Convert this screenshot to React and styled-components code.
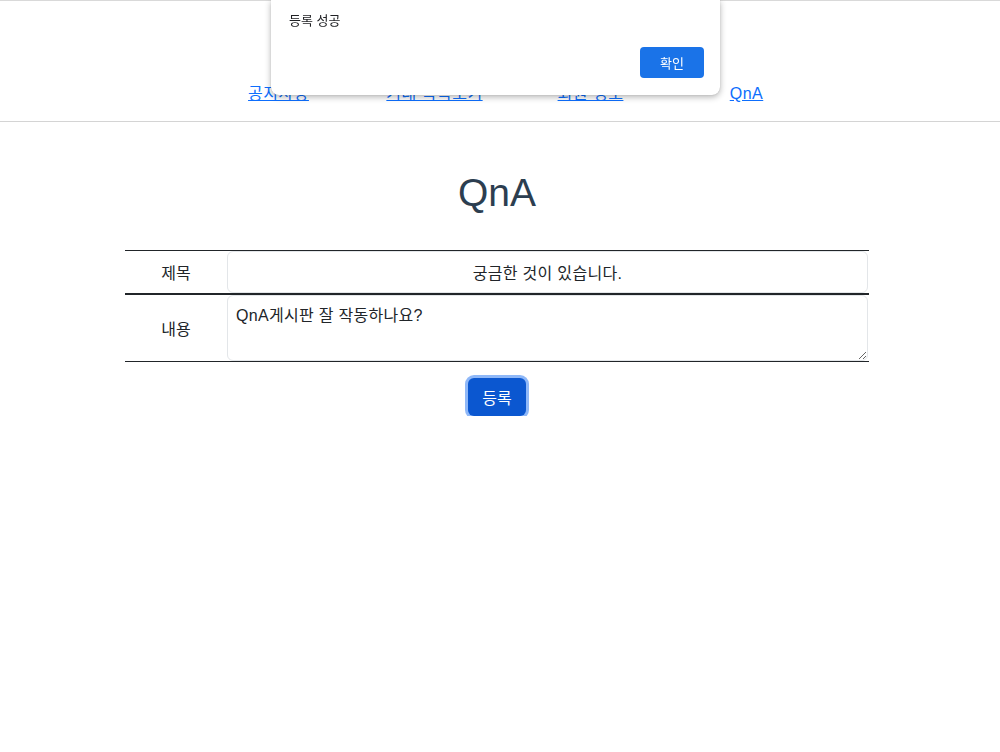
import React from "react";
import styled, { createGlobalStyle } from "styled-components";

const GlobalStyle = createGlobalStyle`
  html, body {
    margin: 0;
    padding: 0;
    background: #fff;
  }
  body {
    font-family: "Liberation Sans", "Noto Sans CJK KR", sans-serif;
    color: #212529;
    font-size: 16px;
  }
  * { box-sizing: border-box; }
`;

const Header = styled.header`
  height: 122px;
  border-top: 1px solid #d9d9d9;
  border-bottom: 1px solid #d4d4d4;
  display: flex;
  align-items: flex-end;
  justify-content: center;
  padding: 0 0 15px 25px;
`;

const Nav = styled.nav`
  display: flex;
`;

const NavLink = styled.a`
  width: 156px;
  text-align: center;
  font-size: 16px;
  line-height: 24px;
  letter-spacing: 0.5px;
  color: #0d6efd;
  text-decoration: underline;
  cursor: pointer;
`;

const Main = styled.main`
  width: 994px;
  display: flex;
  flex-direction: column;
  align-items: center;
  padding-top: 47px;
`;

const Title = styled.h1`
  margin: 0;
  font-size: 39px;
  line-height: 48px;
  font-weight: 400;
  color: #2c3e50;
`;

const Table = styled.div`
  width: 744px;
  margin-top: 33px;
  border-top: 1px solid #212529;
  border-bottom: 1px solid #212529;
`;

const Row = styled.div`
  display: flex;
  align-items: stretch;
  padding-right: 1px;
  border-top: ${(p) => (p.$thick ? "2px solid #212529" : "none")};
`;

const Label = styled.div`
  width: 102px;
  flex-shrink: 0;
  display: flex;
  align-items: center;
  justify-content: center;
  font-size: 16px;
  color: #212529;
`;

const Input = styled.input`
  flex: 1;
  height: 42px;
  border: 1px solid #e3e6e9;
  border-radius: 6px;
  font: inherit;
  font-size: 16px;
  letter-spacing: 0.3px;
  color: #212529;
  text-align: center;
  padding: 6px 12px;
  outline: none;
`;

const TextArea = styled.textarea`
  flex: 1;
  height: 66px;
  border: 1px solid #e3e6e9;
  border-radius: 6px;
  font: inherit;
  font-size: 16px;
  line-height: 24px;
  letter-spacing: 0.3px;
  color: #212529;
  padding: 8px 8px 6px;
  outline: none;
  resize: vertical;
`;

const SubmitButton = styled.button`
  margin-top: 16px;
  height: 38px;
  padding: 0 14px;
  border: none;
  border-radius: 6px;
  background: #0b57d0;
  color: #fff;
  font: inherit;
  font-size: 16px;
  box-shadow: 0 0 0 3px #8fb8f8;
  cursor: pointer;
`;

const Alert = styled.div`
  position: fixed;
  top: 0;
  left: 271px;
  width: 449px;
  height: 95px;
  background: #fff;
  border-radius: 0 0 8px 8px;
  box-shadow: 0 2px 6px rgba(0, 0, 0, 0.3), 0 0 1px rgba(0, 0, 0, 0.25);
  padding: 12px 16px 17px 18px;
  display: flex;
  flex-direction: column;
  justify-content: space-between;
`;

const AlertText = styled.div`
  font-size: 13px;
  line-height: 18px;
  color: #202124;
`;

const AlertActions = styled.div`
  display: flex;
  justify-content: flex-end;
`;

const AlertButton = styled.button`
  width: 64px;
  height: 31px;
  border: none;
  border-radius: 4px;
  background: #1a73e8;
  color: #fff;
  font: inherit;
  font-size: 13px;
  cursor: pointer;
`;

const links = ["공지사항", "거래 목록보기", "회원 정보", "QnA"];

const App = () => {
  return (
    <>
      <GlobalStyle />
      <Header>
        <Nav>
          {links.map((item, index) => (
            <NavLink key={index}>{item}</NavLink>
          ))}
        </Nav>
      </Header>
      <Main>
        <Title>QnA</Title>
        <Table>
          <Row>
            <Label>제목</Label>
            <Input defaultValue="궁금한 것이 있습니다." />
          </Row>
          <Row $thick>
            <Label>내용</Label>
            <TextArea defaultValue="QnA게시판 잘 작동하나요?" />
          </Row>
        </Table>
        <SubmitButton>등록</SubmitButton>
      </Main>
      <Alert>
        <AlertText>등록 성공</AlertText>
        <AlertActions>
          <AlertButton>확인</AlertButton>
        </AlertActions>
      </Alert>
    </>
  );
};

export default App;
